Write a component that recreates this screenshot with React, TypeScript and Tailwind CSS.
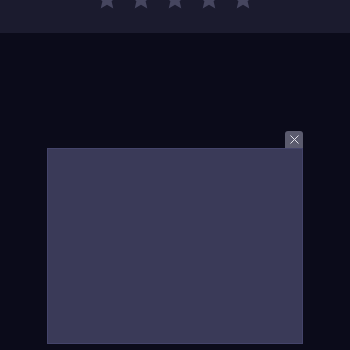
import { X } from "lucide-react";

function Star() {
  return (
    <svg width="24" height="24" viewBox="0 0 24 24" className="text-[#46465f]">
      <path
        fill="currentColor"
        d="M12 2l2.9 6.9 7.1.6-5.4 4.7 1.7 7.3L12 17.8 5.7 21.5l1.7-7.3L2 9.5l7.1-.6z"
      />
    </svg>
  );
}

export default function App() {
  return (
    <div className="w-[350px] h-[350px] bg-[#0b0b1a] overflow-hidden">
      <div className="h-[33px] bg-[#1b1b2e] overflow-hidden">
        <div className="flex justify-center gap-[10px] -mt-[13px]">
          {[0, 1, 2, 3, 4].map((i) => (
            <Star key={i} />
          ))}
        </div>
      </div>
      <div className="mt-[98px] ml-[47px] w-[256px] flex flex-col items-end">
        <button className="w-[18px] h-[17px] bg-[#5b5b6e] rounded-t-[3px] flex items-center justify-center text-[#e2e2ea]">
          <X size={15} strokeWidth={1.6} />
        </button>
        <div className="w-full h-[196px] bg-[#3a3a58] border border-[#44446a]" />
      </div>
    </div>
  );
}
